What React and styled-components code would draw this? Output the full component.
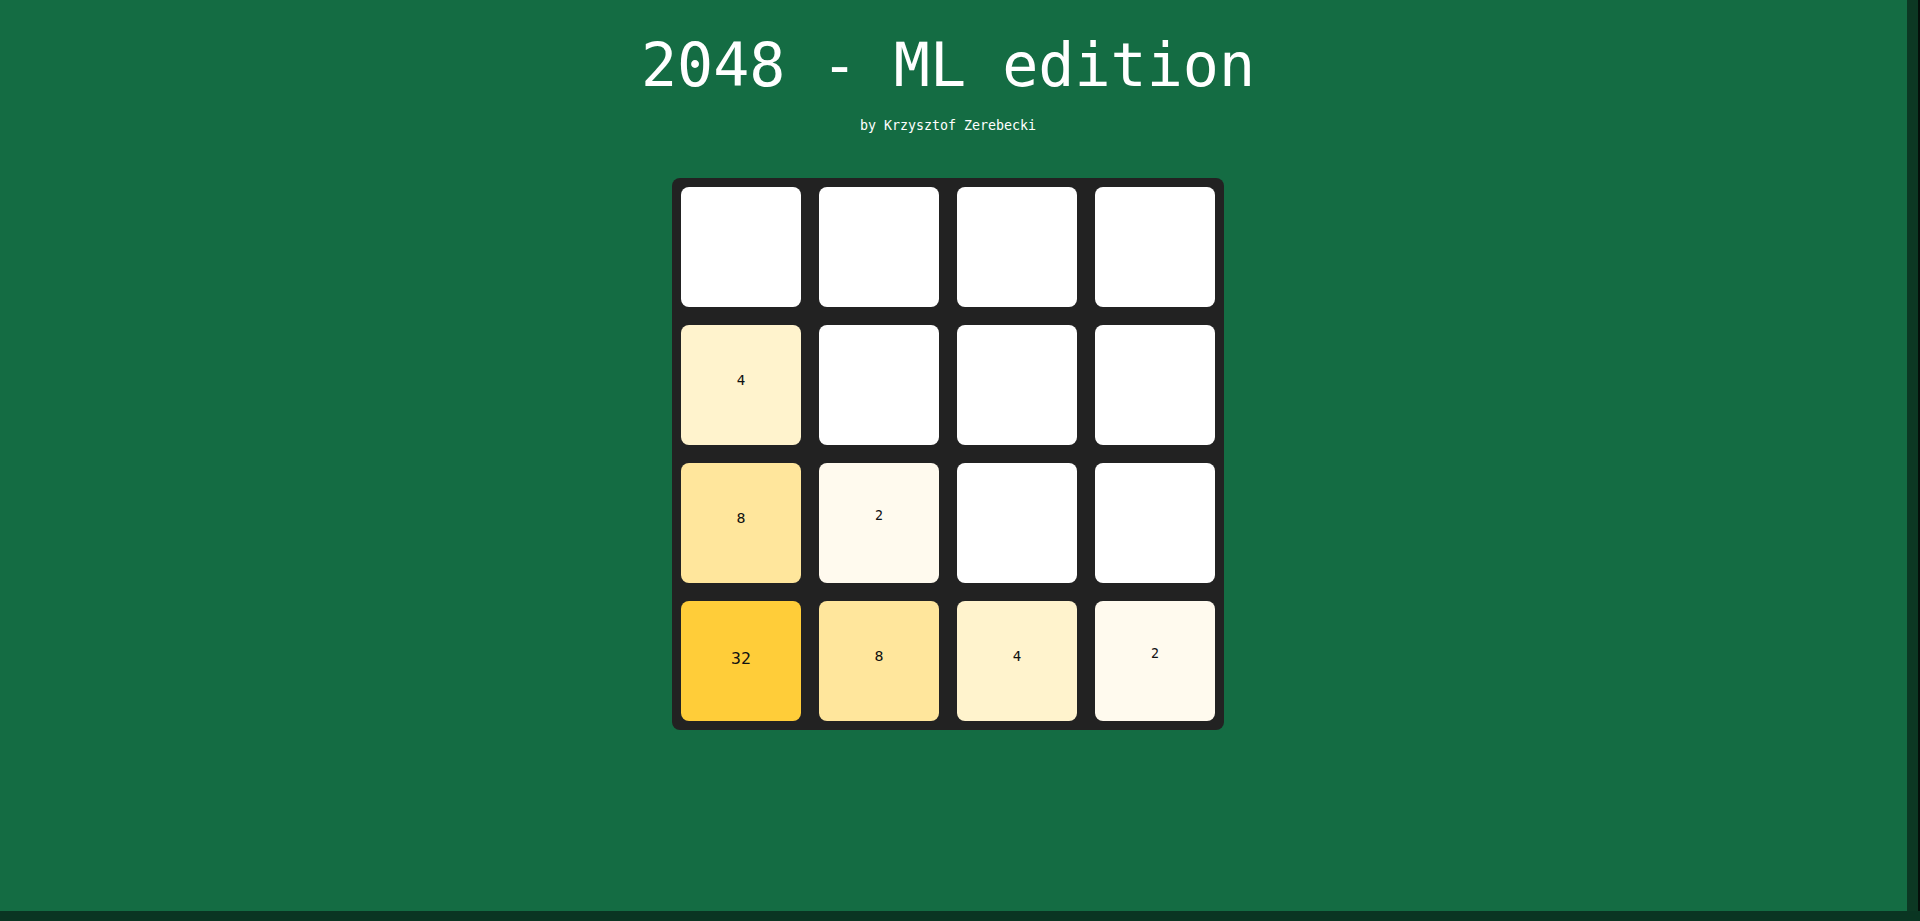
import styled, { createGlobalStyle } from "styled-components";

const GlobalStyle = createGlobalStyle`
  html, body {
    margin: 0;
    padding: 0;
    overflow: hidden;
  }
  body {
    font-family: "DejaVu Sans Mono", "Liberation Mono", monospace;
  }
`;

const board = [
  [0, 0, 0, 0],
  [4, 0, 0, 0],
  [8, 2, 0, 0],
  [32, 8, 4, 2],
];

const tileColors = {
  0: "#ffffff",
  2: "#fffaee",
  4: "#fff3cd",
  8: "#ffe69c",
  16: "#ffda6a",
  32: "#ffcd39",
};

// the smaller numbers sit a bit higher in the tile
const tileLift = { 2: 16, 4: 10, 8: 10, 16: 8, 32: 6 };

export default function App() {
  return (
    <>
      <GlobalStyle />
      <Screen>
        <Main>
          <Title>2048 - ML edition</Title>
          <Author>by Krzysztof Zerebecki</Author>
          <Board>
            {board.flat().map((value, i) => (
              <Tile key={i} $value={value}>
                {value > 0 ? value : ""}
              </Tile>
            ))}
          </Board>
        </Main>
        <SideTrack />
        <BottomTrack />
      </Screen>
    </>
  );
}

const Screen = styled.div`
  width: 100vw;
  height: 100vh;
  display: grid;
  grid-template-columns: 1fr 13px;
  grid-template-rows: 1fr 10px;
  background: #146c43;
`;

const Main = styled.main`
  display: flex;
  flex-direction: column;
  align-items: center;
  padding-right: 11px;
  background: #146c43;
`;

const SideTrack = styled.div`
  background: #0c3823;
  border-right: 2px solid #050f0a;
`;

const BottomTrack = styled.div`
  grid-column: 1 / span 2;
  background: #0a3522;
`;

const Title = styled.h1`
  margin: 35px 0 0;
  font-size: 60px;
  line-height: 60px;
  font-weight: normal;
  color: #ffffff;
`;

const Author = styled.p`
  margin: 23px 0 0;
  font-size: 13.3px;
  line-height: 16px;
  color: #ffffff;
`;

const Board = styled.div`
  margin-top: 44px;
  width: 552px;
  box-sizing: border-box;
  padding: 9px;
  display: grid;
  grid-template-columns: repeat(4, 120px);
  gap: 18px;
  background: #222222;
  border-radius: 8px;
`;

const Tile = styled.div`
  height: 120px;
  box-sizing: border-box;
  padding-bottom: ${(p) => tileLift[p.$value] || 0}px;
  display: flex;
  align-items: center;
  justify-content: center;
  border-radius: 8px;
  background: ${(p) => tileColors[p.$value] || "#ffc107"};
  color: #111111;
  font-size: ${(p) => (p.$value > 0 ? 12.5 + 0.8 * Math.log2(p.$value) : 14)}px;
`;
